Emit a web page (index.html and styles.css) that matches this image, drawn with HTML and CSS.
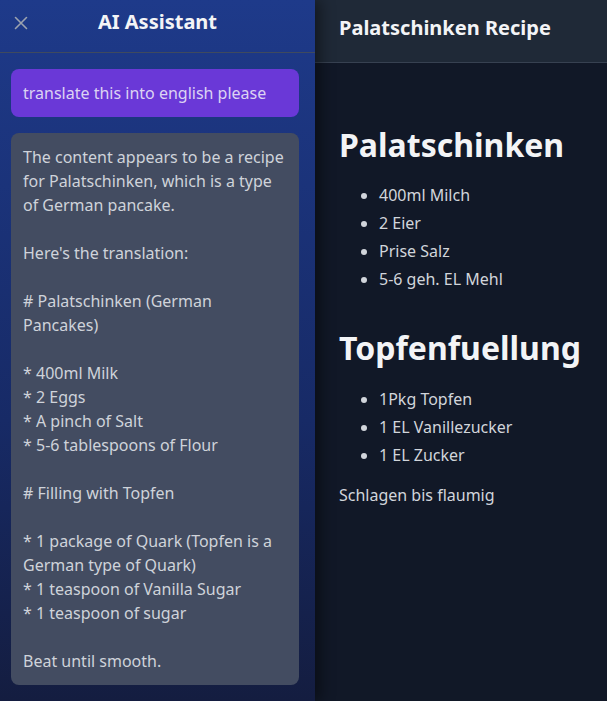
FILE: index.html
```html
<!DOCTYPE html>
<html lang="en">
<head>
<meta charset="utf-8">
<title>AI Assistant</title>
<link rel="stylesheet" href="styles.css">
</head>
<body>
<div class="app">
  <aside class="sidebar">
    <header class="side-header">
      <button class="close" aria-label="Close">
        <svg width="14" height="14" viewBox="0 0 14 14"><path d="M1.5 1.5 L12.5 12.5 M12.5 1.5 L1.5 12.5" stroke="#9ca3af" stroke-width="1.6" stroke-linecap="round" fill="none"/></svg>
      </button>
      <h2 class="side-title">AI Assistant</h2>
    </header>
    <div class="messages">
      <div class="msg user">translate this into english please</div>
      <div class="msg bot">The content appears to be a recipe
for Palatschinken, which is a type
of German pancake.

Here's the translation:

# Palatschinken (German
Pancakes)

* 400ml Milk
* 2 Eggs
* A pinch of Salt
* 5-6 tablespoons of Flour

# Filling with Topfen

* 1 package of Quark (Topfen is a
German type of Quark)
* 1 teaspoon of Vanilla Sugar
* 1 teaspoon of sugar

Beat until smooth.</div>
    </div>
  </aside>
  <main class="doc">
    <header class="doc-header">
      <h2 class="doc-title">Palatschinken Recipe</h2>
    </header>
    <article class="doc-body">
      <h1 class="h-main">Palatschinken</h1>
      <ul class="list">
        <li>400ml Milch</li>
        <li>2 Eier</li>
        <li>Prise Salz</li>
        <li>5-6 geh. EL Mehl</li>
      </ul>
      <h1 class="h-sub">Topfenfuellung</h1>
      <ul class="list">
        <li>1Pkg Topfen</li>
        <li>1 EL Vanillezucker</li>
        <li>1 EL Zucker</li>
      </ul>
      <p class="para">Schlagen bis flaumig</p>
    </article>
  </main>
</div>
</body>
</html>
```

FILE: styles.css
```css
* { box-sizing: border-box; }
html, body {
  margin: 0;
  padding: 0;
  height: 100%;
}
body {
  font-family: "Noto Sans", "Open Sans", sans-serif;
  font-size: 16px;
  line-height: 24px;
  background: #111827;
  color: #d1d5db;
  overflow: hidden;
}
.app {
  display: flex;
  height: 701px;
}
.sidebar {
  width: 315px;
  flex: 0 0 315px;
  background: linear-gradient(to bottom, #1e3a8a 0%, #172a66 60%, #141d40 100%);
  box-shadow: 5px 0 14px rgba(0, 0, 0, 0.45);
  position: relative;
  z-index: 2;
  display: flex;
  flex-direction: column;
}
.side-header {
  height: 53px;
  border-bottom: 1px solid #3f4a5f;
  display: flex;
  align-items: flex-start;
  justify-content: center;
  padding-top: 8px;
  position: relative;
}
.close {
  position: absolute;
  left: 13px;
  top: 15px;
  width: 16px;
  height: 16px;
  padding: 0;
  border: 0;
  background: none;
  display: flex;
  align-items: center;
  justify-content: center;
}
.side-title {
  margin: 0;
  font-size: 20px;
  line-height: 28px;
  font-weight: 700;
  color: #f3f4f6;
}
.messages {
  padding: 16px 16px 0 11px;
  display: flex;
  flex-direction: column;
  gap: 16px;
}
.msg {
  border-radius: 8px;
  padding: 12px;
  white-space: pre-wrap;
}
.user {
  background: #6a38d7;
  color: #dcd3f3;
}
.bot {
  background: #434c61;
  color: #cfd3da;
}
.doc {
  flex: 1;
  display: flex;
  flex-direction: column;
  background: #111827;
}
.doc-header {
  height: 63px;
  background: #1f2937;
  border-bottom: 1px solid #374151;
  padding: 14px 24px 0;
}
.doc-title {
  margin: 0;
  font-size: 20px;
  line-height: 28px;
  font-weight: 700;
  color: #f3f4f6;
}
.doc-body {
  padding: 24px 24px;
}
.h-main, .h-sub {
  font-size: 32px;
  line-height: 36px;
  font-weight: 700;
  color: #f3f4f6;
}
.h-main {
  margin: 40px 0 20px;
}
.h-sub {
  margin: 39px 0 21px;
}
.list {
  margin: 0 0 16px;
  padding-left: 40px;
  list-style: disc;
}
.list li + li {
  margin-top: 4px;
}
.para {
  margin: 0;
}
```
